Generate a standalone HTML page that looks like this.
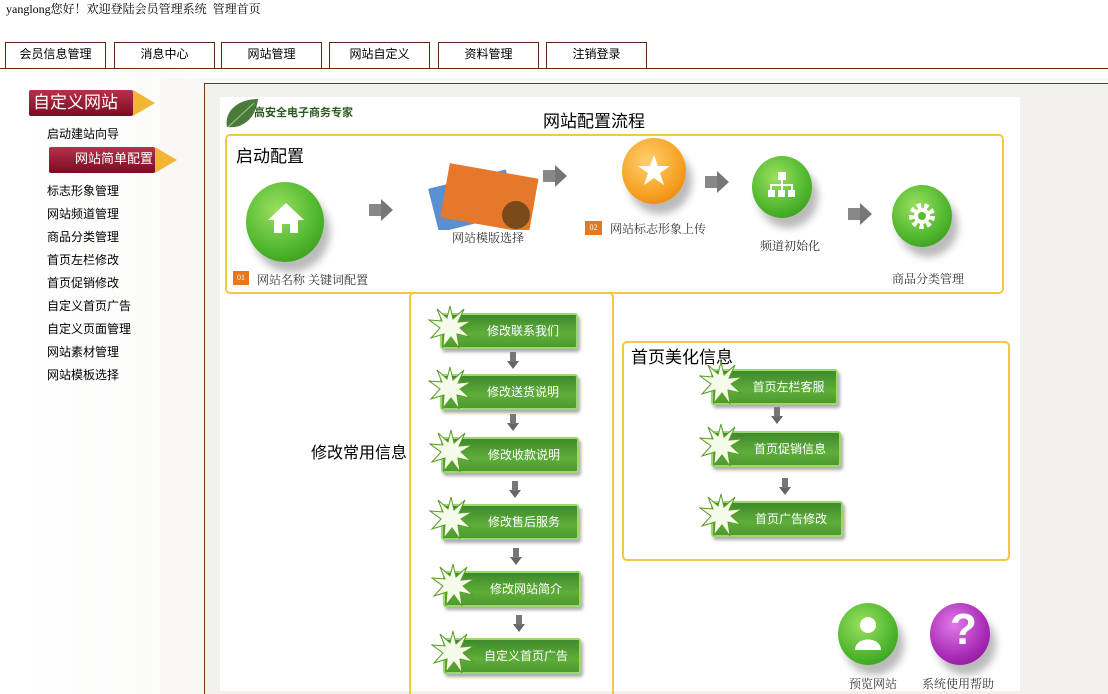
<!DOCTYPE html>
<html><head><meta charset="utf-8"><style>
*{margin:0;padding:0;box-sizing:border-box}
html,body{width:1108px;height:694px;overflow:hidden}
body{background:#fff;font-family:"Liberation Serif","Noto Serif CJK SC","Noto Sans CJK SC",serif;font-size:12px;color:#000;position:relative}
.a{position:absolute}
.tab{position:absolute;top:42px;height:27px;width:101px;border:1px solid #5a2a10;border-bottom:none;text-align:center;line-height:22px;font-family:"Liberation Sans","Noto Sans CJK SC",sans-serif;font-size:12px;background:#fff}
.sb{position:absolute;left:47px;font-size:12px;font-family:"Liberation Sans","Noto Sans CJK SC",sans-serif}
.redbtn{position:absolute;background:linear-gradient(#b6314a,#7a0c22);color:#fff;border-radius:2px;font-family:"Liberation Sans","Noto Sans CJK SC",sans-serif}
.redbtn:after{content:"";position:absolute;right:-22px;top:0;border-left:22px solid #f2b632;border-top:13px solid transparent;border-bottom:13px solid transparent}
.yb{position:absolute;border:2px solid #f5c842;border-radius:5px}
.gb{position:absolute;height:36px;width:138px;background:linear-gradient(#3e8a2c,#5fae3a 60%,#4c9a2f);border:2px solid #9bd96c;border-radius:3px;color:#fff;font-size:12px;line-height:32px;text-align:center;padding-left:28px;box-shadow:2px 3px 3px #aaa;font-family:"Liberation Sans","Noto Sans CJK SC",sans-serif}
.star{position:absolute;left:-14px;top:-10px;width:44px;height:44px}
.dn{position:absolute;width:0;height:0;border-left:6px solid transparent;border-right:6px solid transparent;border-top:8px solid #666}
.dn:before{content:"";position:absolute;left:-3px;top:-17px;width:6px;height:10px;background:#777}
.rt{position:absolute;width:0;height:0;border-top:11px solid transparent;border-bottom:11px solid transparent;border-left:12px solid #777}
.rt:before{content:"";position:absolute;left:-24px;top:-6px;width:12px;height:12px;background:#888}
.cap{position:absolute;font-size:12px;color:#333}
.ball{position:absolute;border-radius:50%;box-shadow:6px 10px 8px #bbb}
</style></head><body>
<div class="a" style="left:6px;top:0;font-size:12px">yanglong您好！欢迎登陆会员管理系统 &nbsp;管理首页</div>
<div class="tab" style="left:5px">会员信息管理</div>
<div class="tab" style="left:114px">消息中心</div>
<div class="tab" style="left:221px">网站管理</div>
<div class="tab" style="left:329px">网站自定义</div>
<div class="tab" style="left:438px">资料管理</div>
<div class="tab" style="left:546px">注销登录</div>
<div class="a" style="left:0;top:68px;width:1108px;height:1px;background:#6b2a14"></div>
<div class="a" style="left:19px;top:69px;width:182px;height:625px;background:linear-gradient(90deg,#fff,#fbfbfa 70%,#fff)"></div>
<div class="a" style="left:160px;top:78px;width:948px;height:616px;background:#f9f8f7"></div>
<div class="a" style="left:204px;top:83px;width:904px;height:611px;border-top:1px solid #6b3a1e;border-left:1px solid #6b3a1e;background:#f2f1ee"></div>
<div class="a" style="left:220px;top:97px;width:800px;height:594px;background:#fff"></div>

<div class="redbtn" style="left:29px;top:90px;width:104px;height:26px;font-size:17px;line-height:26px;padding-left:4px">自定义网站</div>
<div class="sb" style="top:125px">启动建站向导</div>
<div class="redbtn" style="left:49px;top:147px;width:106px;height:26px;font-size:13px;line-height:24px;padding-left:26px">网站简单配置</div>
<div class="sb" style="top:182px">标志形象管理</div>
<div class="sb" style="top:205px">网站频道管理</div>
<div class="sb" style="top:228px">商品分类管理</div>
<div class="sb" style="top:251px">首页左栏修改</div>
<div class="sb" style="top:274px">首页促销修改</div>
<div class="sb" style="top:297px">自定义首页广告</div>
<div class="sb" style="top:320px">自定义页面管理</div>
<div class="sb" style="top:343px">网站素材管理</div>
<div class="sb" style="top:366px">网站模板选择</div>

<svg class="a" style="left:224px;top:97px" width="36" height="34"><path d="M3 30 C0 14 14 2 34 2 C32 20 20 32 3 30Z" fill="#4a7a3a"/><path d="M4 30 L30 6" stroke="#9c9" stroke-width="1"/></svg>
<div class="a" style="left:254px;top:104px;font-size:11px;font-weight:bold;color:#2a5a20;font-family:'Noto Sans CJK SC',sans-serif">高安全电子商务专家</div>
<div class="a" style="left:543px;top:107px;font-size:17px;font-family:'Noto Sans CJK SC',sans-serif">网站配置流程</div>

<div class="yb" style="left:225px;top:134px;width:779px;height:160px"></div>
<div class="a" style="left:236px;top:142px;font-size:17px;font-family:'Noto Sans CJK SC',sans-serif">启动配置</div>
<div class="ball" style="left:246px;top:182px;width:78px;height:80px;background:radial-gradient(circle at 40% 35%,#9be060,#4db52c 60%,#2f8a18)"></div>
<svg class="a" style="left:266px;top:200px" width="40" height="36"><path d="M20 3 L38 20 H32 V33 H24 V24 H16 V33 H8 V20 H2Z" fill="#fff"/></svg>
<div class="a" style="left:233px;top:271px;width:16px;height:14px;background:#e8761a;color:#fff;font-size:8px;text-align:center;line-height:14px">01</div>
<div class="cap" style="left:257px;top:271px">网站名称 关键词配置</div>
<div class="rt" style="left:381px;top:199px"></div>
<svg class="a" style="left:426px;top:160px" width="116" height="70"><rect x="6" y="20" width="80" height="45" fill="#5a8fd0" transform="rotate(-14 40 40)"/><rect x="18" y="10" width="90" height="55" fill="#e5782a" transform="rotate(10 60 40)"/><circle cx="90" cy="55" r="14" fill="#7a4a1a"/></svg>
<div class="cap" style="left:452px;top:229px">网站模版选择</div>
<div class="rt" style="left:555px;top:165px"></div>
<div class="ball" style="left:622px;top:138px;width:64px;height:66px;background:radial-gradient(circle at 40% 35%,#ffd070,#f5a020 60%,#d97a08)"></div>
<svg class="a" style="left:636px;top:152px" width="36" height="36"><path d="M18 3 L22 14 L34 14 L24 21 L28 33 L18 26 L8 33 L12 21 L2 14 L14 14Z" fill="#fff"/></svg>
<div class="a" style="left:585px;top:221px;width:17px;height:14px;background:#e8761a;color:#fff;font-size:8px;text-align:center;line-height:14px">02</div>
<div class="cap" style="left:610px;top:220px">网站标志形象上传</div>
<div class="rt" style="left:717px;top:171px"></div>
<div class="ball" style="left:752px;top:156px;width:60px;height:62px;background:radial-gradient(circle at 40% 35%,#9be060,#4db52c 60%,#2f8a18)"></div>
<svg class="a" style="left:766px;top:170px" width="32" height="30"><rect x="12" y="2" width="8" height="8" fill="#fff"/><rect x="2" y="20" width="7" height="7" fill="#fff"/><rect x="12" y="20" width="7" height="7" fill="#fff"/><rect x="22" y="20" width="7" height="7" fill="#fff"/><path d="M16 10V20M5 20V15H26V20" stroke="#fff" stroke-width="2" fill="none"/></svg>
<div class="cap" style="left:760px;top:237px">频道初始化</div>
<div class="rt" style="left:860px;top:203px"></div>
<div class="ball" style="left:892px;top:185px;width:60px;height:62px;background:radial-gradient(circle at 40% 35%,#9be060,#4db52c 60%,#2f8a18)"></div>
<svg class="a" style="left:906px;top:200px" width="32" height="32"><circle cx="16" cy="16" r="10" fill="none" stroke="#fff" stroke-width="6" stroke-dasharray="4 3"/><circle cx="16" cy="16" r="8" fill="#fff"/><circle cx="16" cy="16" r="4" fill="#5bbd34"/></svg>
<div class="cap" style="left:892px;top:270px">商品分类管理</div>

<div class="a" style="left:311px;top:439px;font-size:16px;font-family:'Noto Sans CJK SC',sans-serif">修改常用信息</div>
<div class="yb" style="left:409px;top:292px;width:205px;height:410px"></div>
<div class="yb" style="left:622px;top:341px;width:388px;height:220px"></div>
<div class="a" style="left:631px;top:343px;font-size:17px;font-family:'Noto Sans CJK SC',sans-serif">首页美化信息</div>

<svg width="0" height="0" style="position:absolute"><defs><symbol id="st" viewBox="0 0 44 44"><path d="M22 1 L25 14 L36 4 L30 17 L43 16 L32 23 L42 32 L29 29 L31 43 L23 32 L15 42 L16 29 L3 33 L12 23 L1 15 L14 16 L9 4 L19 13Z" fill="#f4fbe8" stroke="#5a9a2a" stroke-width="1"/></symbol></defs></svg>

<div class="gb" style="left:440px;top:313px">修改联系我们<svg class="star"><use href="#st"/></svg></div>
<div class="dn" style="left:507px;top:361px"></div>
<div class="gb" style="left:440px;top:374px">修改送货说明<svg class="star"><use href="#st"/></svg></div>
<div class="dn" style="left:507px;top:423px"></div>
<div class="gb" style="left:441px;top:437px">修改收款说明<svg class="star"><use href="#st"/></svg></div>
<div class="dn" style="left:509px;top:490px"></div>
<div class="gb" style="left:441px;top:504px">修改售后服务<svg class="star"><use href="#st"/></svg></div>
<div class="dn" style="left:510px;top:557px"></div>
<div class="gb" style="left:443px;top:571px">修改网站简介<svg class="star"><use href="#st"/></svg></div>
<div class="dn" style="left:513px;top:624px"></div>
<div class="gb" style="left:443px;top:638px">自定义首页广告<svg class="star"><use href="#st"/></svg></div>

<div class="gb" style="left:711px;top:369px;width:127px">首页左栏客服<svg class="star"><use href="#st"/></svg></div>
<div class="dn" style="left:771px;top:416px"></div>
<div class="gb" style="left:711px;top:431px;width:130px">首页促销信息<svg class="star"><use href="#st"/></svg></div>
<div class="dn" style="left:779px;top:487px"></div>
<div class="gb" style="left:711px;top:501px;width:132px">首页广告修改<svg class="star"><use href="#st"/></svg></div>

<div class="ball" style="left:838px;top:603px;width:60px;height:62px;background:radial-gradient(circle at 40% 35%,#9be060,#4db52c 60%,#2f8a18)"></div>
<svg class="a" style="left:852px;top:614px" width="32" height="38"><circle cx="16" cy="11" r="8" fill="#fff"/><path d="M3 36 C3 22 29 22 29 36Z" fill="#fff"/></svg>
<div class="cap" style="left:849px;top:675px">预览网站</div>
<div class="ball" style="left:930px;top:603px;width:60px;height:62px;background:radial-gradient(circle at 40% 35%,#e07ae8,#a82ab5 60%,#7a1288)"></div>
<div class="a" style="left:950px;top:605px;font-size:44px;color:#fff;font-family:'Liberation Sans',sans-serif;font-weight:bold">?</div>
<div class="cap" style="left:922px;top:675px">系统使用帮助</div>
</body></html>
